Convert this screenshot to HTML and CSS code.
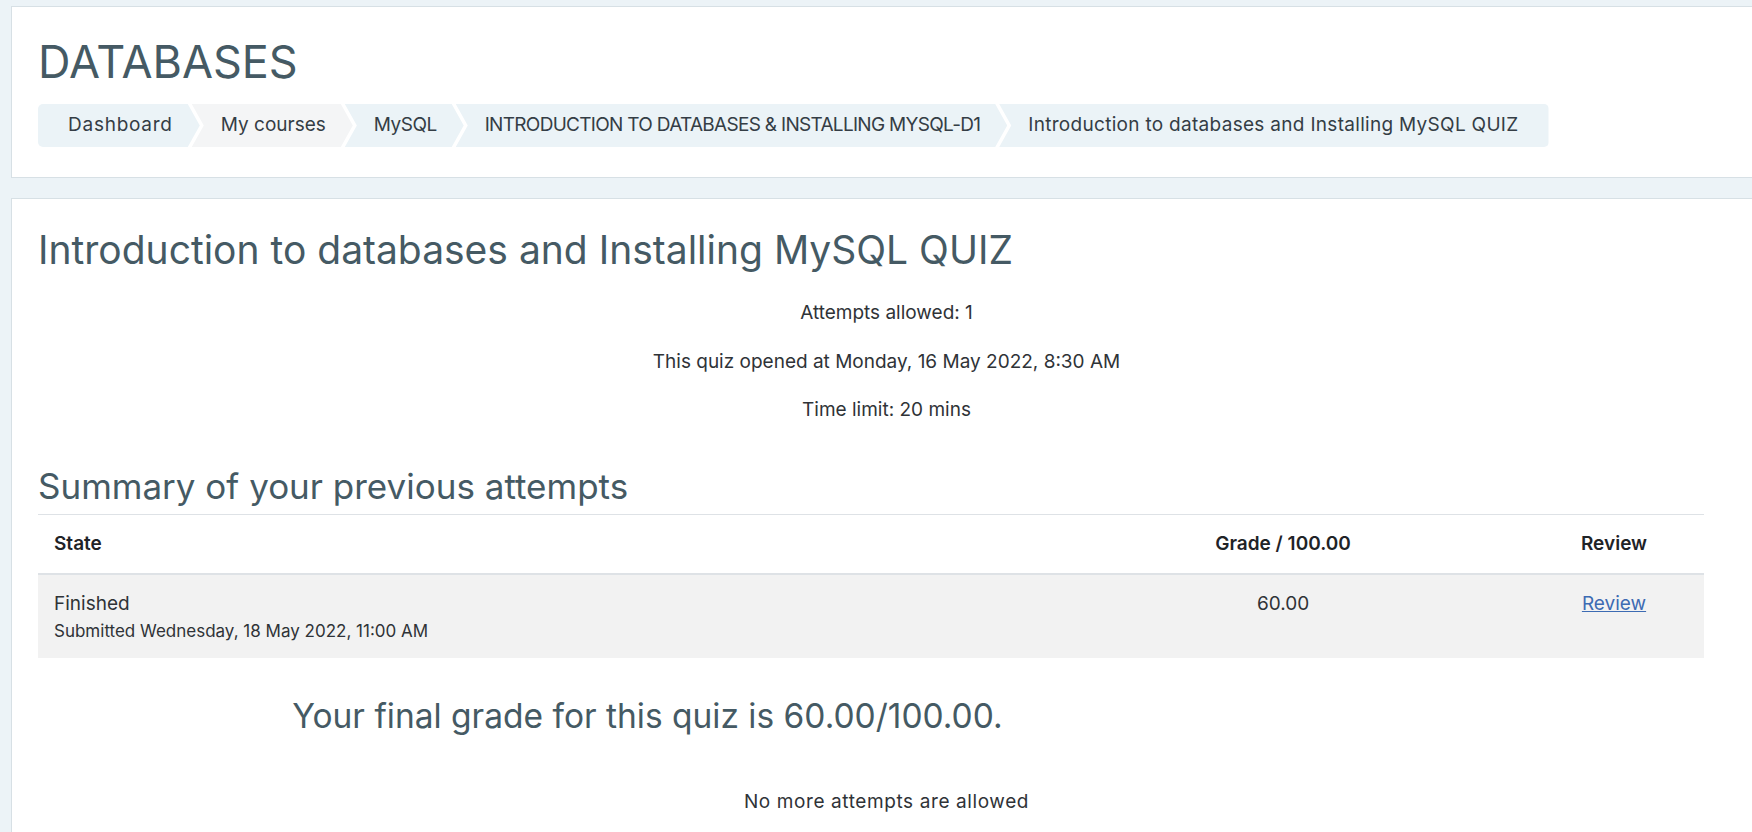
FILE: index.html
```html
<!DOCTYPE html>
<html lang="en">
<head>
<meta charset="utf-8">
<title>Introduction to databases and Installing MySQL QUIZ</title>
<link rel="stylesheet" href="styles.css">
</head>
<body>
<div class="page">
  <header class="card header-card">
    <h1 class="course-title">DATABASES</h1>
    <nav aria-label="Navigation bar">
      <ol class="breadcrumb">
        <li class="crumb crumb-first">Dashboard</li>
        <li class="crumb crumb-alt">My courses</li>
        <li class="crumb crumb-short">MySQL</li>
        <li class="crumb crumb-caps">INTRODUCTION TO DATABASES &amp; INSTALLING MYSQL-D1</li>
        <li class="crumb crumb-last">Introduction to databases and Installing MySQL QUIZ</li>
      </ol>
    </nav>
  </header>

  <main class="card main-card">
    <h2 class="page-title">Introduction to databases and Installing MySQL QUIZ</h2>
    <div class="quizinfo">
      <p>Attempts allowed: 1</p>
      <p>This quiz opened at Monday, 16 May 2022, 8:30 AM</p>
      <p>Time limit: 20 mins</p>
    </div>

    <h3 class="section-title">Summary of your previous attempts</h3>
    <table class="attempts">
      <colgroup>
        <col class="col-state">
        <col class="col-grade">
        <col class="col-review">
      </colgroup>
      <thead>
        <tr>
          <th class="cell-left">State</th>
          <th>Grade / 100.00</th>
          <th>Review</th>
        </tr>
      </thead>
      <tbody>
        <tr>
          <td class="cell-left">Finished<div class="submitted">Submitted Wednesday, 18 May 2022, 11:00 AM</div></td>
          <td>60.00</td>
          <td><a class="review-link" href="#">Review</a></td>
        </tr>
      </tbody>
    </table>

    <div class="feedback">
      <h3 class="final-grade">Your final grade for this quiz is 60.00/100.00.</h3>
    </div>
    <p class="no-more">No more attempts are allowed</p>
  </main>
</div>
</body>
</html>
```

FILE: styles.css
```css
html, body {
  margin: 0;
  padding: 0;
  background: #ecf3f7;
  overflow: hidden;
}

body {
  font-family: "Inter", "Noto Sans", "DejaVu Sans", sans-serif;
  font-size: 19px;
  line-height: 28.5px;
  color: #2f3337;
}

.page {
  display: flex;
  flex-direction: column;
  gap: 20px;
  padding: 6px 0 0 11px;
}

.card {
  background: #ffffff;
  border: 1px solid #d7e0e5;
  margin-right: -10px;
  padding: 0 26px;
}

.header-card {
  padding-top: 30px;
  padding-bottom: 30px;
}

.course-title {
  margin: 0 0 17px;
  font-size: 45px;
  line-height: 50px;
  font-weight: 400;
  color: #455a64;
}

.breadcrumb {
  display: flex;
  list-style: none;
  margin: 0;
  padding: 0;
  height: 43px;
}

.crumb {
  display: flex;
  align-items: center;
  white-space: nowrap;
  padding: 0 27px 0 29px;
  margin-left: -8px;
  background: #ebf3f7;
  color: #343d45;
  font-size: 19px;
  letter-spacing: 0.3px;
  clip-path: polygon(0 0, calc(100% - 12px) 0, 100% 50%, calc(100% - 12px) 100%, 0 100%, 12px 50%);
}

.crumb-alt {
  background: #f4f5f6;
  letter-spacing: 0;
}

.crumb-short {
  letter-spacing: -0.5px;
}

.crumb-caps {
  letter-spacing: -0.7px;
}

.crumb-first {
  margin-left: 0;
  padding-left: 30px;
  letter-spacing: 0.75px;
  border-radius: 5px 0 0 5px;
  clip-path: polygon(0 0, calc(100% - 12px) 0, 100% 50%, calc(100% - 12px) 100%, 0 100%);
}

.crumb-last {
  padding-right: 30px;
  border-radius: 0 5px 5px 0;
  clip-path: polygon(0 0, 100% 0, 100% 100%, 0 100%, 12px 50%);
}

.main-card {
  padding-top: 27px;
  padding-bottom: 20px;
}

.page-title {
  margin: 0 0 26px;
  font-size: 39px;
  line-height: 47px;
  font-weight: 400;
  color: #455a64;
}

.quizinfo {
  text-align: center;
}

.quizinfo p {
  margin: 0 0 20px;
}

.section-title {
  margin: 40px 0 7px;
  font-size: 35px;
  line-height: 42px;
  font-weight: 400;
  color: #455a64;
}

.attempts {
  width: calc(100% - 31px);
  border-collapse: collapse;
}

.col-grade {
  width: 482px;
}

.col-review {
  width: 180px;
}

.attempts th,
.attempts td {
  padding: 15px 16px;
  text-align: center;
  vertical-align: top;
}

.attempts th {
  border-top: 1px solid #dee2e6;
  border-bottom: 2px solid #dee2e6;
  font-weight: 600;
  color: #1f2327;
}

.attempts td {
  background: #f2f2f2;
}

.attempts .cell-left {
  text-align: left;
}

.submitted {
  font-size: 17px;
  line-height: 24.75px;
}

.review-link {
  color: #3d6bb3;
  text-decoration: underline;
}

.feedback {
  width: 1219px;
  margin-top: 38px;
  text-align: center;
}

.final-grade {
  margin: 0;
  font-size: 33.5px;
  line-height: 41px;
  font-weight: 400;
  color: #455a64;
}

.no-more {
  margin: 51px 0 0;
  text-align: center;
  letter-spacing: 0.6px;
}
```
